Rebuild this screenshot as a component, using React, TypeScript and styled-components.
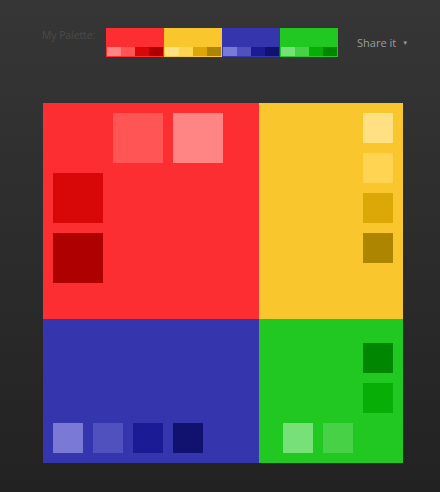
import React from 'react';
import styled, { createGlobalStyle } from 'styled-components';

const GlobalStyle = createGlobalStyle`
  html, body {
    margin: 0;
    padding: 0;
    background: #222222;
  }
  body {
    font-family: 'Open Sans', 'Noto Sans', sans-serif;
  }
`;

interface Hue {
  name: string;
  base: string;
  shades: string[]; // lightest -> darkest
}

const hues: Hue[] = [
  { name: 'red', base: '#fc2e31', shades: ['#ff8585', '#ff5555', '#d90808', '#af0000'] },
  { name: 'yellow', base: '#f9c62d', shades: ['#ffe083', '#ffd453', '#dba808', '#ae8500'] },
  { name: 'blue', base: '#3535ad', shades: ['#7a7ad6', '#5050be', '#1b1b96', '#111170'] },
  { name: 'green', base: '#22c822', shades: ['#77e077', '#47d147', '#06ae06', '#008600'] },
];

const [red, yellow, blue, green] = hues;

const Page = styled.div`
  height: 492px;
  background: linear-gradient(to bottom, #363636 0%, #2d2d2d 45%, #222222 100%);
  overflow: hidden;
`;

const Toolbar = styled.div`
  display: flex;
  align-items: flex-start;
  padding: 28px 0 0 42px;
  height: 29px;
`;

const Label = styled.div`
  width: 64px;
  white-space: nowrap;
  font-size: 10.5px;
  letter-spacing: -0.1px;
  line-height: 14px;
  color: #4b4b4b;
`;

const Strip = styled.div`
  display: flex;
`;

const Swatch = styled.div<{ $base: string }>`
  width: 58px;
  height: 29px;
  box-sizing: border-box;
  padding: 1px;
  background: ${(p) => p.$base};
  display: flex;
  flex-direction: column;
  justify-content: flex-end;
`;

const ShadeRow = styled.div`
  display: flex;
  height: 9px;
`;

const Shade = styled.div<{ $color: string }>`
  flex: 1;
  background: ${(p) => p.$color};
`;

const Share = styled.div`
  margin-left: 19px;
  margin-top: 8px;
  display: flex;
  align-items: center;
  gap: 6px;
  font-size: 11px;
  line-height: 14px;
  color: #9c9c9c;
  white-space: nowrap;
`;

const Caret = styled.span`
  font-size: 6px;
  color: #9c9c9c;
`;

const Board = styled.div`
  margin: 46px 0 0 43px;
  display: grid;
  grid-template-columns: 216px 144px;
  grid-template-rows: 216px 144px;
  width: 360px;
`;

const Quadrant = styled.div<{ $base: string }>`
  background: ${(p) => p.$base};
  box-sizing: border-box;
  padding: 10px;
`;

const RedGrid = styled(Quadrant)`
  display: grid;
  grid-template-columns: repeat(3, 50px);
  grid-template-rows: repeat(3, 50px);
  gap: 10px;
`;

const YellowColumn = styled(Quadrant)`
  display: flex;
  flex-direction: column;
  align-items: flex-end;
  gap: 10px;
`;

const BlueRow = styled(Quadrant)`
  display: flex;
  align-items: flex-end;
  gap: 10px;
`;

const GreenGrid = styled(Quadrant)`
  display: grid;
  grid-template-columns: repeat(3, 30px);
  grid-template-rows: repeat(3, 30px);
  gap: 10px;
  justify-content: end;
  align-content: end;
`;

const Tile = styled.div<{ $color: string; $size: number; $row?: number; $col?: number }>`
  width: ${(p) => p.$size}px;
  height: ${(p) => p.$size}px;
  background: ${(p) => p.$color};
  ${(p) => (p.$row ? `grid-row: ${p.$row};` : '')}
  ${(p) => (p.$col ? `grid-column: ${p.$col};` : '')}
`;

const App = () => {
  return (
    <Page>
      <GlobalStyle />
      <Toolbar>
        <Label>My Palette:</Label>
        <Strip>
          {hues.map((h) => (
            <Swatch key={h.name} $base={h.base}>
              <ShadeRow>
                {h.shades.map((s) => (
                  <Shade key={s} $color={s} />
                ))}
              </ShadeRow>
            </Swatch>
          ))}
        </Strip>
        <Share>
          Share it <Caret>▼</Caret>
        </Share>
      </Toolbar>

      <Board>
        <RedGrid $base={red.base}>
          <Tile $size={50} $color={red.shades[1]} $row={1} $col={2} />
          <Tile $size={50} $color={red.shades[0]} $row={1} $col={3} />
          <Tile $size={50} $color={red.shades[2]} $row={2} $col={1} />
          <Tile $size={50} $color={red.shades[3]} $row={3} $col={1} />
        </RedGrid>
        <YellowColumn $base={yellow.base}>
          {yellow.shades.map((s) => (
            <Tile key={s} $size={30} $color={s} />
          ))}
        </YellowColumn>
        <BlueRow $base={blue.base}>
          {blue.shades.map((s) => (
            <Tile key={s} $size={30} $color={s} />
          ))}
        </BlueRow>
        <GreenGrid $base={green.base}>
          <Tile $size={30} $color={green.shades[3]} $row={1} $col={3} />
          <Tile $size={30} $color={green.shades[2]} $row={2} $col={3} />
          <Tile $size={30} $color={green.shades[0]} $row={3} $col={1} />
          <Tile $size={30} $color={green.shades[1]} $row={3} $col={2} />
        </GreenGrid>
      </Board>
    </Page>
  );
};

export default App;
